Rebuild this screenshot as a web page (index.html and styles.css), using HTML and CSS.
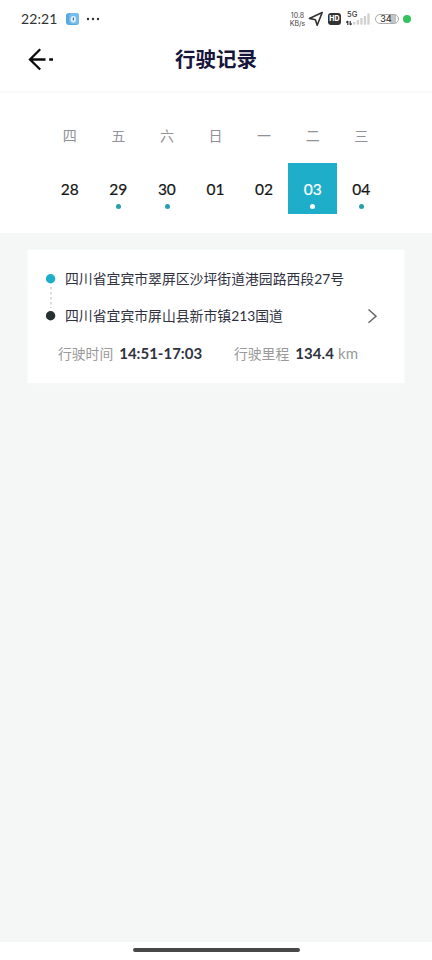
FILE: index.html
```html
<!DOCTYPE html>
<html lang="zh-CN">
<head>
<meta charset="utf-8">
<title>行驶记录</title>
<link rel="stylesheet" href="styles.css">
</head>
<body>
<div class="screen">
  <div class="status">
    <span class="clock">22:21</span>
    <svg class="app" width="13" height="12" viewBox="0 0 13 12"><rect width="13" height="12" rx="3" fill="#55a9df"/><rect x="3" width="10" height="11" rx="3" fill="#75bdea"/><ellipse cx="7.3" cy="6.2" rx="2.6" ry="3.3" fill="#e9f4ff"/><path d="M7.4 4.5v3" stroke="#4c69b8" stroke-width="1.3"/></svg>
    <svg class="more" width="14" height="4" viewBox="0 0 14 4" fill="#303030"><circle cx="2" cy="2" r="1.2"/><circle cx="7" cy="2" r="1.2"/><circle cx="12" cy="2" r="1.2"/></svg>
    <span class="speed"><span>10.8</span><span>KB/s</span></span>
    <svg class="nav" width="16" height="16" viewBox="0 0 16 16"><path d="M14.2 1.5 1.4 7.4l6 1.3 1.8 5.6z" fill="none" stroke="#333" stroke-width="1.6" stroke-linejoin="round"/></svg>
    <span class="hd">HD</span>
    <span class="signal">
      <span class="gen">5G</span>
      <svg width="24" height="14" viewBox="0 0 24 14"><path d="M1.8 13V9M.4 10.5 1.8 9M4.2 9v4M5.6 11.5 4.2 13" stroke="#333" stroke-width="1.2" fill="none"/><g fill="#cfcfcf"><rect x="7.2" y="10" width="2.3" height="2.6"/><rect x="10.8" y="8" width="2.3" height="4.6"/><rect x="14.3" y="6" width="2.3" height="6.6"/><rect x="17.8" y="4" width="2.3" height="8.6"/><rect x="21.3" y="1.5" width="2.3" height="11.1"/></g></svg>
    </span>
    <span class="battery">34</span>
    <span class="live"></span>
  </div>
  <header class="header">
    <svg class="back" width="26" height="24" viewBox="0 0 26 24"><path d="M12.2 2.3 2 12.5l10.2 10M2 12.5h15.5M21.2 12.5h3.8" fill="none" stroke="#0b0b0b" stroke-width="2.3"/></svg>
    <h1>行驶记录</h1>
  </header>
  <section class="calendar">
    <div class="day"><span class="week">四</span><div class="date">28</div></div>
    <div class="day"><span class="week">五</span><div class="date marked">29</div></div>
    <div class="day"><span class="week">六</span><div class="date marked">30</div></div>
    <div class="day"><span class="week">日</span><div class="date">01</div></div>
    <div class="day"><span class="week">一</span><div class="date">02</div></div>
    <div class="day"><span class="week">二</span><div class="date marked active">03</div></div>
    <div class="day"><span class="week">三</span><div class="date marked">04</div></div>
  </section>
  <main class="content">
    <article class="card">
      <div class="route">
        <svg width="10" height="48" viewBox="0 0 10 48"><circle cx="4.6" cy="5.7" r="4.7" fill="#1eaec9"/><path d="M5 14v21" stroke="#b4babc" stroke-dasharray="2.5 2.5"/><circle cx="4.6" cy="42.7" r="4.7" fill="#27312f"/></svg>
        <div class="places"><span>四川省宜宾市翠屏区沙坪街道港园路西段27号</span><span>四川省宜宾市屏山县新市镇213国道</span></div>
        <svg class="chevron" width="11" height="16" viewBox="0 0 11 16"><path d="m1.5 1.5 7.5 6.7-7.5 6.5" fill="none" stroke="#666" stroke-width="1.5"/></svg>
      </div>
      <div class="stats">
        <div class="time"><span>行驶时间</span><b>14:51-17:03</b></div>
        <div class="distance"><span>行驶里程</span><b>134.4</b><span class="unit">km</span></div>
      </div>
    </article>
  </main>
  <footer class="homebar"><span></span></footer>
</div>
</body>
</html>
```
FILE: styles.css
```css
* { box-sizing: border-box; }
body { margin: 0; background: #fff; font-family: Lato, "Noto Sans CJK SC", sans-serif; }
.screen { width: 432px; height: 960px; display: flex; flex-direction: column; overflow: hidden; }
.status { height: 38px; flex: none; display: flex; align-items: center; padding-left: 21px; color: #333; }
.clock { width: 36px; font-size: 14px; line-height: 16px; letter-spacing: .1px; white-space: nowrap; }
.app { margin-left: 9px; }
.more { margin-left: 7px; }
.speed { margin-left: 188px; width: 19px; display: flex; flex-direction: column; align-items: center; font: 7px/9px Inter, sans-serif; color: #444; white-space: nowrap; }
.speed span:first-child { height: 8px; }
.nav { margin-left: 1px; }
.hd { margin-left: 4px; width: 13px; height: 12px; border-radius: 3px; background: #333; color: #fff; font: 800 7px/12px Inter, sans-serif; text-align: center; }
.signal { position: relative; margin-left: 5px; width: 24px; height: 14px; }
.signal svg { display: block; }
.gen { position: absolute; left: 1px; top: -1px; font: 500 7.5px/7px Inter, sans-serif; }
.battery { margin-left: 5px; width: 24px; height: 10px; border: 1px solid #aaa; border-radius: 5px; background: linear-gradient(90deg, #fff 0 62%, #c4c4c4 62% 90%, #fff 90%); font: 500 9px/8px Inter, sans-serif; text-align: center; padding-right: 2px; }
.live { margin-left: 4px; width: 8px; height: 8px; border-radius: 50%; background: #34c25d; }
.header { height: 55px; flex: none; display: flex; align-items: center; padding: 0 28px 11px; border-bottom: 2px solid #fafafa; }
.header h1 { width: 324px; margin: 0; text-align: center; font-size: 20.5px; line-height: 28px; font-weight: 700; color: #17163a; }
.back { flex: none; }
.calendar { height: 140px; flex: none; display: grid; grid-template-columns: repeat(7, 48.6px); padding: 31px 45.4px 0; }
.day { text-align: center; }
.week { display: block; height: 39px; font-size: 14px; line-height: 24px; color: #929298; }
.date { height: 51px; position: relative; font: 400 15.5px/53px Lato, sans-serif; color: #151515; -webkit-text-stroke: .2px currentColor; }
.marked::after { content: ""; position: absolute; left: 22px; bottom: 5px; width: 5px; height: 5px; border-radius: 50%; background: #279fae; }
.date.active { background: #1eaec9; color: #fff; }
.active::after { background: #fff; }
.content { flex: 1; background: #f5f7f7; padding: 17px 28px 0; }
.card { height: 133px; background: #fff; padding: 23px 18px 0; box-shadow: 0 0 3px #fafbfb; }
.route { height: 68px; display: flex; }
.places { width: 302px; margin-left: 9px; display: flex; flex-direction: column; font-size: 13.85px; color: #30313f; white-space: nowrap; }
.places span { height: 37px; flex: none; line-height: 11px; }
.chevron { margin-top: 35px; }
.stats { display: flex; padding-left: 12px; align-items: baseline; line-height: 25px; white-space: nowrap; font-size: 13.8px; color: #999; }
.time { width: 176px; }
.stats b { margin-left: 6px; font-size: 15px; color: #303240; }
.distance b { letter-spacing: .1px; }
.unit { margin-left: 4px; font-size: 15px; }
.homebar { height: 18px; flex: none; display: flex; justify-content: center; padding-top: 6px; }
.homebar span { width: 167px; height: 4px; border-radius: 2px; background: #484848; }
```
